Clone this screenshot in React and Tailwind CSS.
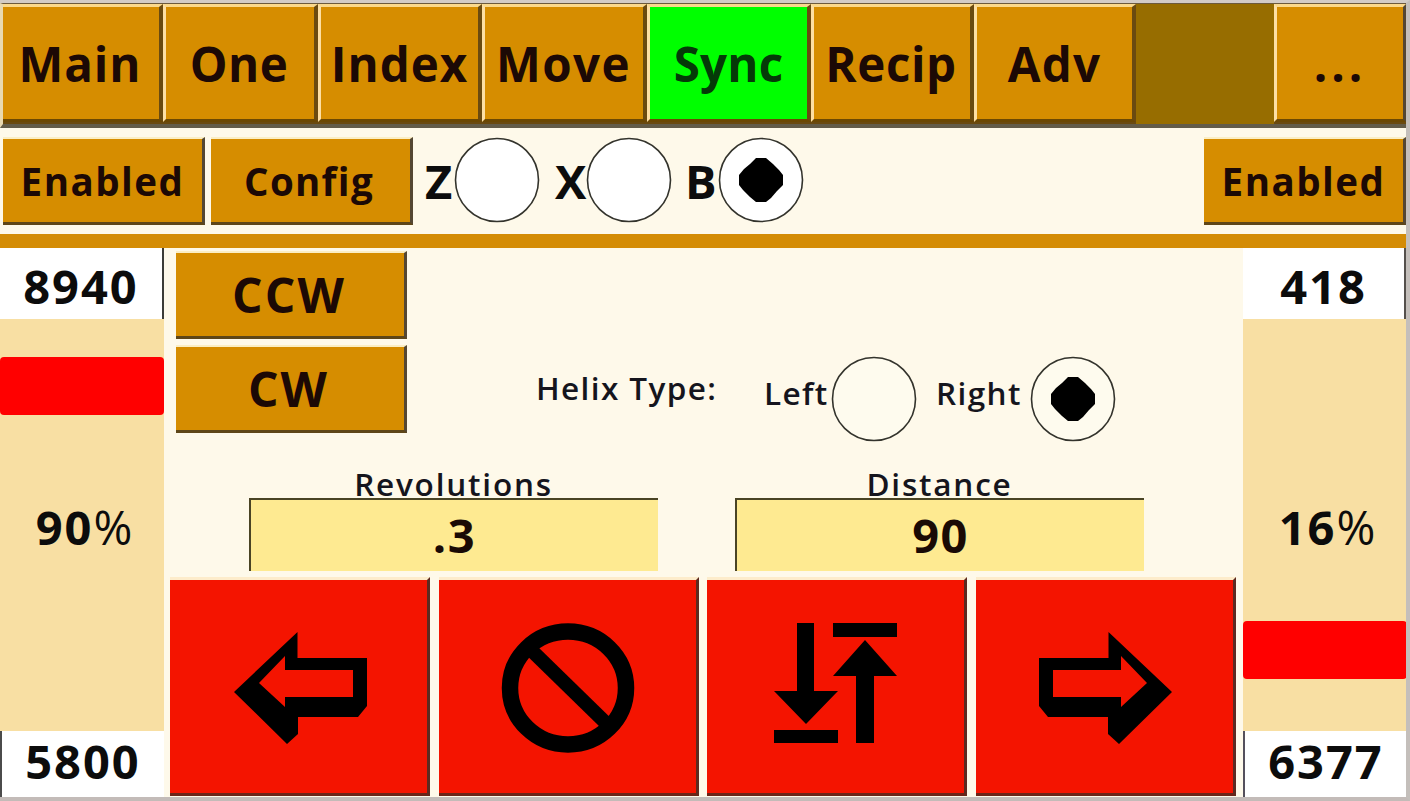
const FONT = "font-['Open_Sans','Noto_Sans',sans-serif]";

const tabs = [
  { name: 'Main', size: 'w-[160px] border-l-0', text: 'mr-[2px] tracking-[0.9px]' },
  { name: 'One', size: 'w-[155px] border-l-3', text: 'mr-[2px] tracking-[0.4px]' },
  { name: 'Index', size: 'w-[164px] border-l-3', text: 'tracking-[1px]' },
  { name: 'Move', size: 'w-[165px] border-l-3', text: 'mr-[1px] tracking-[1.4px]' },
  { name: 'Sync', size: 'w-[164px] border-l-3', text: 'tracking-[0.2px]', active: true },
  { name: 'Recip', size: 'w-[163px] border-l-3', text: 'mr-[2px] tracking-[0.6px]' },
  { name: 'Adv', size: 'w-[162px] border-l-3', text: 'tracking-[1.2px]' },
];

const bevel =
  'flex items-center justify-center border-t-2 border-r-3 border-b-3 border-t-[#fbeec4] border-r-[#544733] border-b-[#5e4618] bg-[#d68d00] whitespace-nowrap text-[#1c0905]';

function Tab({ name, size, text, active }) {
  return (
    <button
      className={`flex h-[118px] shrink-0 items-center justify-center border-t-3 border-r-4 border-b-3 border-t-[#fbd98c] border-r-[#6a4a10] border-b-[#6b4803] border-l-[#fddfa4] pt-[1px] text-[47.5px] leading-none font-bold ${size} ${
        active ? 'bg-[#00ff00] text-[#053a08]' : 'bg-[#d68d00] text-[#1c0905]'
      }`}
    >
      <span className={text}>{name}</span>
    </button>
  );
}

function Radio({ checked, fill }) {
  return (
    <svg className="h-[86px] w-[86px] shrink-0" viewBox="0 0 86 86">
      <circle cx="43" cy="43" r="41.5" fill={fill} stroke="#33332c" strokeWidth="1.6" />
      {checked && <path d="M38 21H48L55 27L61 33L65 38V48L59 54L53 61L48 65H38L32 60L25 53L21 48V38L26 32L32 27Z" fill="#000" />}
    </svg>
  );
}

function Slider({ high, low, percent, thumb, topEdge, bottomEdge }) {
  return (
    <aside className="flex w-[164px] shrink-0 flex-col text-[47px] leading-none font-bold tracking-[2px] text-[#0c0c0c]">
      <div className={`flex h-[71px] items-center justify-center bg-white pt-[5px] ${topEdge}`}>{high}</div>
      <div className="relative flex h-[412px] items-center justify-center bg-[#f8dfa3] pt-[4px] pl-[6px]">
        <div className={`absolute left-0 h-[58px] w-full rounded-[4px] bg-[#ff0000] ${thumb}`} />
        <span>
          {percent}
          <span className="font-normal">%</span>
        </span>
      </div>
      <div className={`flex h-[66px] items-center justify-center bg-white pb-[5px] ${bottomEdge}`}>{low}</div>
    </aside>
  );
}

function Field({ label, value }) {
  return (
    <label className="flex w-[409px] flex-col items-center">
      <span className="flex h-[31px] items-center pt-[2px] text-[31.5px] leading-none font-semibold tracking-[1.8px] text-[#15151d]">{label}</span>
      <span className="flex h-[73px] w-full items-center justify-center border-t-2 border-l-2 border-[#4a4424] bg-[#feea91] text-[47px] leading-none font-bold tracking-[1.5px] text-[#1a0a05]">
        {value}
      </span>
    </label>
  );
}

function Action({ children }) {
  return (
    <button className="h-[219px] w-[260px] shrink-0 border-t-3 border-r-3 border-b-3 border-t-[#fdeccb] border-r-[#5d2a20] border-b-[#6b2418] bg-[#f41400]">
      {children}
    </button>
  );
}

const arrow =
  'M64 112L127.5 52V78H197V126L188 137H128V154L117 164ZM89 103L115 127V117H183V90H115V76Z';

export default function App() {
  return (
    <main className={`flex h-[801px] w-[1410px] flex-col overflow-hidden border-t-3 border-r-4 border-b-4 border-t-[#d3ccc6] border-r-[#c4bfbb] border-b-[#c3bbb8] bg-[#fef9ea] ${FONT}`}>
      <nav className="flex h-[125px] w-full shrink-0 border-t-1 border-b-4 border-l-3 border-t-[#6d5a3c] border-b-[#635c49] border-l-[#e9d9b0] bg-[#6a4a10]">
        {tabs.map((t) => (
          <Tab key={t.name} {...t} />
        ))}
        <div className="h-[120px] w-[138px] bg-[#976d00]" />
        <button className="flex h-[118px] w-[132px] items-center justify-center border-t-3 border-r-3 border-b-3 border-l-3 border-t-[#fbd98c] border-r-[#544733] border-b-[#6b4803] border-l-[#fddfa4] bg-[#d68d00] pt-[1px] text-[47.5px] leading-none font-bold tracking-[4px] text-[#1c0905]">
          ...
        </button>
      </nav>

      <section className="flex h-[106px] w-full shrink-0 items-start pt-[9px] pl-[3px]">
        <button className={`${bevel} h-[88px] w-[202px] pt-[2px] text-[38.5px] leading-none font-bold tracking-[1.5px]`}>Enabled</button>
        <button className={`${bevel} ml-[6px] h-[88px] w-[202px] pt-[2px] pr-[3px] text-[38.5px] leading-none font-bold tracking-[1.3px]`}>Config</button>
        <div className="ml-[12px] flex h-[86px] items-center text-[47px] leading-none font-bold text-[#0c0c0c]">
          <span className="w-[29px] pt-[3px]">Z</span>
          <Radio fill="#fff" />
          <span className="ml-[15px] w-[31px] pt-[3px]">X</span>
          <Radio fill="#fff" />
          <span className="ml-[13px] w-[33px] pt-[3px]">B</span>
          <Radio fill="#fff" checked />
        </div>
        <button className={`${bevel} ml-auto h-[88px] w-[202px] pt-[2px] text-[38.5px] leading-none font-bold tracking-[1.5px]`}>Enabled</button>
      </section>

      <hr className="h-[14px] w-full shrink-0 border-0 bg-[#d48c05]" />

      <div className="flex h-[549px] w-full">
        <Slider high="8940" low="5800" percent="90" thumb="top-[38px]" topEdge="border-r-2 border-r-[#3c3c38]" bottomEdge="border-l-2 border-l-[#4b4b4b]" />

        <div className="flex w-[1079px] shrink-0 flex-col">
          <div className="flex h-[217px] shrink-0 pl-[12px]">
            <div className="flex w-[231px] shrink-0 flex-col gap-[6px] pt-[3px]">
              <button className={`${bevel} h-[88px] w-full pr-[2px] text-[48px] leading-none font-bold tracking-[2.2px]`}>CCW</button>
              <button className={`${bevel} h-[88px] w-full pr-[3px] text-[48px] leading-none font-bold tracking-[2px]`}>CW</button>
            </div>
            <div className="mt-[108px] flex h-[86px] text-[31.5px] leading-none font-semibold tracking-[1.4px] text-[#15151d]">
              <span className="ml-[129px] w-[228px] pt-[16px]">Helix Type:</span>
              <span className="w-[67px] pt-[21px]">Left</span>
              <Radio fill="#fefbee" />
              <span className="ml-[19px] w-[94px] pt-[21px]">Right</span>
              <Radio fill="#fefbee" checked />
            </div>
          </div>
          <div className="flex h-[112px] shrink-0 gap-[77px] pt-[2px] pl-[85px]">
            <Field label="Revolutions" value=".3" />
            <Field label="Distance" value="90" />
          </div>
          <div className="flex h-[219px] justify-between pr-[7px] pl-[6px]">
            <Action>
              <svg className="h-[213px] w-[257px]" viewBox="0 0 257 213">
                <path d={arrow} fillRule="evenodd" />
              </svg>
            </Action>
            <Action>
              <svg className="h-[213px] w-[257px]" viewBox="0 0 257 213">
                <ellipse cx="129" cy="108" rx="58" ry="56.5" fill="none" stroke="#000" strokeWidth="16.5" />
                <path d="M88 66L171 147" stroke="#000" strokeWidth="14" />
              </svg>
            </Action>
            <Action>
              <svg className="h-[213px] w-[257px]" viewBox="0 0 257 213">
                <path d="M90 43H107V111H131L99 144L67 111H90ZM67 150H131V163H67ZM126 43H190V57H126ZM158 60L190 96H167V163H149V96H126Z" />
              </svg>
            </Action>
            <Action>
              <svg className="h-[213px] w-[257px]" viewBox="0 0 257 213">
                <path d={arrow} fillRule="evenodd" transform="matrix(-1 0 0 1 260 0)" />
              </svg>
            </Action>
          </div>
        </div>

        <Slider high="418" low="6377" percent="16" thumb="top-[302px]" topEdge="border-r-3 border-r-[#55504c]" bottomEdge="border-l-2 border-l-[#55505c]" />
      </div>
    </main>
  );
}
